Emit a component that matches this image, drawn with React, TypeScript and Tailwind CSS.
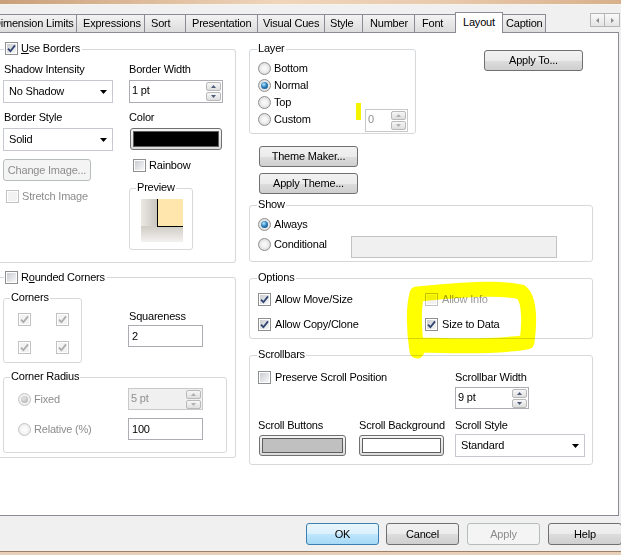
import React from "react";

type CBProps = { checked?: boolean; disabled?: boolean };

function CheckBox({ checked = false, disabled = false }: CBProps) {
  return (
    <span
      className={`relative inline-flex w-[13px] h-[13px] shrink-0 items-center justify-center border bg-white ${
        disabled ? "border-[#c2c2c2]" : "border-[#8e8f8f]"
      }`}
    >
      <span
        className={`w-[9px] h-[9px] ${
          disabled ? "bg-[#f2f2f2]" : "bg-[linear-gradient(135deg,#c9ccd1,#f8f8f8)]"
        }`}
      />
      {checked && (
        <svg className="absolute left-0 top-0" width="11" height="11" viewBox="0 0 11 11">
          <path
            d="M2 5.6 L4.4 8.2 L9 2.4"
            fill="none"
            stroke={disabled ? "#ababab" : "#2f4370"}
            strokeWidth="1.8"
          />
        </svg>
      )}
    </span>
  );
}

function Radio({ checked = false, disabled = false }: CBProps) {
  return (
    <span
      className={`inline-flex w-[13px] h-[13px] shrink-0 rounded-full border items-center justify-center ${
        disabled
          ? "border-[#c4c4c4] bg-[radial-gradient(circle,#fafafa_30%,#e2e2e2_100%)]"
          : "border-[#8e8f8f] bg-[radial-gradient(circle,#f7f7f7_25%,#cfcfcf_100%)]"
      }`}
    >
      {checked && (
        <span
          className={`w-[7px] h-[7px] rounded-full ${
            disabled
              ? "bg-[radial-gradient(circle_at_40%_35%,#e6e6e6,#a9a9a9)]"
              : "bg-[radial-gradient(circle_at_40%_35%,#bfe9fc_0%,#2b82c2_45%,#0c3b66_100%)]"
          }`}
        />
      )}
    </span>
  );
}

function Arrow({ up = false, color = "#4e5b7a" }: { up?: boolean; color?: string }) {
  return (
    <svg width="5" height="3" viewBox="0 0 5 3">
      <path d={up ? "M0 3 L2.5 0 L5 3 Z" : "M0 0 L5 0 L2.5 3 Z"} fill={color} />
    </svg>
  );
}

function SpinBtns({ disabled = false }: { disabled?: boolean }) {
  const c = disabled ? "#b0b0b0" : "#4e5b7a";
  return (
    <div className="flex flex-col gap-[1px] mr-[1px] mt-[1px]">
      <span className="flex w-[15px] h-[9px] items-center justify-center border border-[#b9b9b9] rounded-[2px] bg-[linear-gradient(#f7f7f7,#dedede)]">
        <Arrow up color={c} />
      </span>
      <span className="flex w-[15px] h-[9px] items-center justify-center border border-[#b9b9b9] rounded-[2px] bg-[linear-gradient(#f7f7f7,#dedede)]">
        <Arrow color={c} />
      </span>
    </div>
  );
}

function Spin({
  text,
  className,
  disabled = false,
  gray = false,
}: {
  text: string;
  className: string;
  disabled?: boolean;
  gray?: boolean;
}) {
  return (
    <div
      className={`flex items-start border ${disabled ? "border-[#c9c9c9]" : "border-[#abadb3]"} ${
        gray ? "bg-[#f0f0f0]" : "bg-white"
      } ${className}`}
    >
      <span
        className={`flex-1 pl-[2px] pt-[3px] leading-[13px] ${disabled ? "text-[#8f8f8f]" : ""}`}
      >
        {text}
      </span>
      <SpinBtns disabled={disabled} />
    </div>
  );
}

function Select({ text, className }: { text: string; className: string }) {
  return (
    <div
      className={`flex items-center justify-between border border-[#c6cad0] bg-white pl-[5px] pr-[5px] ${className}`}
    >
      <span className="leading-[13px]">{text}</span>
      <svg width="7" height="4" viewBox="0 0 7 4">
        <path d="M0 0 L7 0 L3.5 4 Z" fill="#000" />
      </svg>
    </div>
  );
}

function TextBox({
  text,
  className,
  disabled = false,
}: {
  text: string;
  className: string;
  disabled?: boolean;
}) {
  return (
    <div
      className={`flex items-center border border-[#abadb3] bg-white pl-[3px] leading-[13px] ${
        disabled ? "text-[#8f8f8f]" : ""
      } ${className}`}
    >
      {text}
    </div>
  );
}

function Btn({
  children,
  className,
  kind = "normal",
}: {
  children: React.ReactNode;
  className: string;
  kind?: "normal" | "default" | "disabled";
}) {
  const style =
    kind === "default"
      ? "border-[#3c7fb1] bg-[linear-gradient(#eaf6fd_0%,#d9f0fc_50%,#bee6fd_51%,#a7d9f5_100%)] text-black"
      : kind === "disabled"
      ? "border-[#b7bcbf] bg-[#f4f4f4] text-[#8d8d8d]"
      : "border-[#707070] bg-[linear-gradient(#f2f2f2_0%,#ebebeb_50%,#dddddd_51%,#cfcfcf_100%)] text-black";
  return (
    <div
      className={`flex items-center justify-center border rounded-[3px] leading-[13px] shrink-0 ${style} ${className}`}
    >
      {children}
    </div>
  );
}

function Swatch({ fill, className }: { fill: string; className: string }) {
  return (
    <div
      className={`border border-[#707070] rounded-[3px] bg-[linear-gradient(#f4f4f4,#dcdcdc)] p-[2px] ${className}`}
    >
      <div className={`w-full h-full border border-[#5e5e5e] ${fill}`} />
    </div>
  );
}

function Label({ children, className = "" }: { children: React.ReactNode; className?: string }) {
  return <span className={`leading-[13px] whitespace-nowrap ${className}`}>{children}</span>;
}

function Legend({ children, className = "" }: { children: React.ReactNode; className?: string }) {
  return (
    <span
      className={`absolute top-[-8px] bg-white px-[1px] leading-[13px] whitespace-nowrap ${className}`}
    >
      {children}
    </span>
  );
}

function Tab({
  label,
  className,
  selected = false,
}: {
  label: string;
  className: string;
  selected?: boolean;
}) {
  if (selected) {
    return (
      <div
        className={`relative z-10 h-[21px] -mb-px border-t border-l border-r border-[#898c95] bg-white pt-[3px] leading-[13px] whitespace-nowrap shrink-0 ${className}`}
      >
        {label}
      </div>
    );
  }
  return (
    <div
      className={`h-[18px] border-t border-[#898c95] bg-[linear-gradient(#f3f3f3,#dcdcdc)] leading-[17px] whitespace-nowrap shrink-0 overflow-hidden ${className}`}
    >
      {label}
    </div>
  );
}

function Preview() {
  return (
    <svg width="42" height="43" viewBox="0 0 42 43">
      <defs>
        <linearGradient id="lg" x1="0" y1="0" x2="1" y2="0">
          <stop offset="0" stopColor="#ebe8e4" />
          <stop offset="1" stopColor="#c9c5bf" />
        </linearGradient>
        <linearGradient id="bg" x1="0" y1="0" x2="0" y2="1">
          <stop offset="0" stopColor="#cfcbc5" />
          <stop offset="1" stopColor="#f3f2f0" />
        </linearGradient>
      </defs>
      <rect x="0" y="0" width="42" height="43" fill="#ebe9e6" />
      <rect x="0" y="0" width="16" height="43" fill="url(#lg)" />
      <rect x="0" y="27" width="42" height="16" fill="url(#bg)" />
      <rect x="16" y="0" width="26" height="27" fill="#fee6ac" />
      <line x1="16.5" y1="0" x2="16.5" y2="27.5" stroke="#000" strokeWidth="1" />
      <line x1="16" y1="27.5" x2="42" y2="27.5" stroke="#000" strokeWidth="1" />
    </svg>
  );
}

export default function App() {
  return (
    <div className="relative w-[621px] h-[555px] overflow-hidden bg-[#f0f0f0] flex flex-col text-[11px] text-black tracking-[-0.2px] font-['Liberation_Sans',Arial,sans-serif]">
      {/* window frame */}
      <div className="h-[4px] shrink-0 bg-[linear-gradient(90deg,#c9a07a,#efd5ba_45%,#e9cbae_70%,#d7b08b)]" />
      <div className="h-[1px] shrink-0 bg-[#f8f2ec]" />

      {/* tab strip */}
      <div className="relative z-10 mt-[7px] h-[20px] flex items-end shrink-0">
        <Tab label="Dimension Limits" className="ml-[-15px] w-[91px] pl-[7px] border-l" />
        <Tab label="Expressions" className="w-[68px] pl-[6px] border-l" />
        <Tab label="Sort" className="w-[41px] pl-[6px] border-l" />
        <Tab label="Presentation" className="w-[72px] pl-[6px] border-l" />
        <Tab label="Visual Cues" className="w-[67px] pl-[5px] border-l" />
        <Tab label="Style" className="w-[38px] pl-[5px] border-l" />
        <Tab label="Number" className="w-[52px] pl-[7px] border-l" />
        <Tab label="Font" className="w-[41px] pl-[7px] border-l" />
        <Tab label="Layout" className="w-[48px] pl-[7px]" selected />
        <Tab label="Caption" className="w-[43px] pl-[3px] border-r" />
        <div className="ml-auto mr-[1px] self-start mt-[1px] flex">
          <span className="flex w-[15px] h-[14px] items-center justify-center border border-[#b5b5b5] bg-[linear-gradient(#fafafa,#e4e4e4)]">
            <svg width="3" height="5" viewBox="0 0 3 5">
              <path d="M3 0 L0 2.5 L3 5 Z" fill="#8a8a8a" />
            </svg>
          </span>
          <span className="flex w-[15px] h-[14px] items-center justify-center border border-l-0 border-[#b5b5b5] bg-[linear-gradient(#fafafa,#e4e4e4)]">
            <svg width="3" height="5" viewBox="0 0 3 5">
              <path d="M0 0 L3 2.5 L0 5 Z" fill="#8a8a8a" />
            </svg>
          </span>
        </div>
      </div>

      {/* panel */}
      <div className="ml-[-1px] w-[620px] h-[484px] shrink-0 bg-white border border-[#898c95] flex items-start">
        {/* left column */}
        <div className="w-[236px] flex flex-col">
          {/* Use Borders */}
          <div className="relative mt-[16px] h-[214px] border-t border-r border-b border-[#d5d9dc] rounded-r-[3px]">
            <div className="absolute left-[4px] top-[-8px] h-[13px] flex items-center gap-[3px] bg-white pl-[1px] pr-[2px]">
              <CheckBox checked />
              <Label>
                <span className="underline">U</span>se Borders
              </Label>
            </div>
            <div className="flex pt-[13px]">
              <div className="ml-[3px] w-[110px] flex flex-col">
                <Label className="pl-[1px]">Shadow Intensity</Label>
                <Select text="No Shadow" className="mt-[4px] h-[23px] w-[110px]" />
                <Label className="mt-[8px] pl-[1px]">Border Style</Label>
                <Select text="Solid" className="mt-[4px] h-[23px] w-[110px]" />
                <Btn kind="disabled" className="mt-[8px] h-[22px] w-[88px]">
                  Change Image...
                </Btn>
                <div className="mt-[9px] pl-[3px] flex items-center gap-[3px]">
                  <CheckBox disabled />
                  <Label className="text-[#8d8d8d]">Stretch Image</Label>
                </div>
              </div>
              <div className="ml-[16px] w-[94px] flex flex-col">
                <Label>Border Width</Label>
                <Spin text="1 pt" className="mt-[4px] h-[23px] w-[94px]" />
                <Label className="mt-[8px]">Color</Label>
                <Swatch fill="bg-black" className="mt-[4px] ml-[1px] h-[22px] w-[92px]" />
                <div className="mt-[9px] pl-[4px] flex items-center gap-[3px]">
                  <CheckBox />
                  <Label>Rainbow</Label>
                </div>
                <div className="relative mt-[16px] w-[64px] h-[62px] border border-[#d5d9dc] rounded-[3px]">
                  <Legend className="left-[6px]">Preview</Legend>
                  <div className="mt-[10px] ml-[11px] w-[42px] h-[43px]">
                    <Preview />
                  </div>
                </div>
              </div>
            </div>
          </div>

          {/* Rounded Corners */}
          <div className="relative mt-[14px] h-[181px] border-t border-r border-b border-[#d5d9dc] rounded-r-[3px]">
            <div className="absolute left-[4px] top-[-7px] h-[13px] flex items-center gap-[3px] bg-white pl-[1px] pr-[2px]">
              <CheckBox />
              <Label>
                R<span className="underline">o</span>unded Corners
              </Label>
            </div>
            <div className="flex flex-col pt-[20px]">
              <div className="flex items-start">
                <div className="relative ml-[3px] w-[79px] h-[65px] border border-[#d5d9dc] rounded-[3px]">
                  <Legend className="left-[6px]">Corners</Legend>
                  <div className="grid grid-cols-[13px_13px] gap-x-[25px] gap-y-[15px] pt-[14px] pl-[14px]">
                    <CheckBox checked disabled />
                    <CheckBox checked disabled />
                    <CheckBox checked disabled />
                    <CheckBox checked disabled />
                  </div>
                </div>
                <div className="ml-[46px] mt-[12px] flex flex-col">
                  <Label className="pl-[1px]">Squareness</Label>
                  <TextBox text="2" className="mt-[2px] h-[22px] w-[75px]" />
                </div>
              </div>
              <div className="relative mt-[14px] ml-[3px] w-[224px] h-[76px] border border-[#d5d9dc] rounded-[3px]">
                <Legend className="left-[6px]">Corner Radius</Legend>
                <div className="flex flex-col">
                  <div className="mt-[10px] h-[22px] flex items-center">
                    <div className="w-[124px] pl-[14px] flex items-center gap-[3px]">
                      <Radio checked disabled />
                      <Label className="text-[#8d8d8d]">Fixed</Label>
                    </div>
                    <Spin text="5 pt" disabled gray className="h-[22px] w-[75px]" />
                  </div>
                  <div className="mt-[8px] h-[22px] flex items-center">
                    <div className="w-[124px] pl-[14px] flex items-center gap-[3px]">
                      <Radio disabled />
                      <Label className="text-[#8d8d8d]">Relative (%)</Label>
                    </div>
                    <TextBox text="100" className="h-[22px] w-[75px]" />
                  </div>
                </div>
              </div>
            </div>
          </div>
        </div>

        {/* right column */}
        <div className="ml-[13px] w-[344px] flex flex-col">
          <div className="mt-[16px] flex items-start">
            <div className="relative w-[167px] h-[85px] border border-[#d5d9dc] rounded-[3px] flex">
              <Legend className="left-[7px]">Layer</Legend>
              <div className="ml-[8px] pt-[10px] flex flex-col">
                {[
                  ["Bottom", false],
                  ["Normal", true],
                  ["Top", false],
                  ["Custom", false],
                ].map(([t, c]) => (
                  <div key={t as string} className="h-[17px] flex items-center gap-[3px]">
                    <Radio checked={c as boolean} />
                    <Label>{t as string}</Label>
                  </div>
                ))}
              </div>
              <div className="ml-auto mr-[7px] mb-[1px] self-end flex items-end">
                <div className="w-[5px] h-[17px] mb-[12px] bg-[#f4f400]" />
                <Spin text="0" disabled className="ml-[4px] h-[23px] w-[43px]" />
              </div>
            </div>
            <Btn className="ml-[68px] mt-[1px] w-[99px] h-[21px]">Apply To...</Btn>
          </div>

          <Btn className="mt-[12px] ml-[10px] w-[99px] h-[21px]">Theme Maker...</Btn>
          <Btn className="mt-[6px] ml-[10px] w-[99px] h-[21px]">Apply Theme...</Btn>

          {/* Show */}
          <div className="relative mt-[11px] h-[57px] border border-[#d5d9dc] rounded-[3px] flex flex-col">
            <Legend className="left-[7px]">Show</Legend>
            <div className="mt-[12px] pl-[8px] h-[13px] flex items-center gap-[3px]">
              <Radio checked />
              <Label>Always</Label>
            </div>
            <div className="mt-[5px] flex items-start">
              <div className="w-[101px] pl-[8px] pt-[2px] flex items-center gap-[3px]">
                <Radio />
                <Label>Conditional</Label>
              </div>
              <div className="w-[206px] h-[22px] border border-[#c3c3c3] bg-[#f0f0f0]" />
            </div>
          </div>

          {/* Options */}
          <div className="relative mt-[16px] h-[61px] border border-[#d5d9dc] rounded-[3px] flex flex-col">
            <Legend className="left-[7px]">Options</Legend>
            <div className="mt-[14px] pl-[8px] flex">
              <div className="w-[167px] flex items-center gap-[4px]">
                <CheckBox checked />
                <Label>Allow Move/Size</Label>
              </div>
              <div className="flex items-center gap-[4px]">
                <CheckBox disabled />
                <Label className="text-[#9a9a9a]">Allow Info</Label>
              </div>
            </div>
            <div className="mt-[12px] pl-[8px] flex">
              <div className="w-[167px] flex items-center gap-[4px]">
                <CheckBox checked />
                <Label>Allow Copy/Clone</Label>
              </div>
              <div className="flex items-center gap-[4px]">
                <CheckBox checked />
                <Label>Size to Data</Label>
              </div>
            </div>
          </div>

          {/* Scrollbars */}
          <div className="relative mt-[16px] h-[110px] border border-[#d5d9dc] rounded-[3px] flex flex-col">
            <Legend className="left-[7px]">Scrollbars</Legend>
            <div className="mt-[15px] pl-[8px] flex items-start">
              <div className="w-[197px] flex items-center gap-[4px]">
                <CheckBox />
                <Label>Preserve Scroll Position</Label>
              </div>
              <div className="flex flex-col">
                <Label>Scrollbar Width</Label>
                <Spin text="9 pt" className="mt-[3px] h-[22px] w-[74px]" />
              </div>
            </div>
            <div className="mt-[10px] pl-[8px] flex items-start">
              <div className="w-[101px] flex flex-col">
                <Label>Scroll Buttons</Label>
                <Swatch fill="bg-[#c0c0c0]" className="mt-[3px] ml-[1px] w-[87px] h-[21px]" />
              </div>
              <div className="w-[96px] flex flex-col">
                <Label>Scroll Background</Label>
                <Swatch fill="bg-white" className="mt-[3px] w-[85px] h-[21px]" />
              </div>
              <div className="flex flex-col">
                <Label>Scroll Style</Label>
                <Select text="Standard" className="mt-[2px] w-[130px] h-[23px]" />
              </div>
            </div>
          </div>
        </div>
      </div>

      {/* footer buttons */}
      <div className="mt-[7px] flex shrink-0">
        <Btn kind="default" className="ml-[306px] w-[73px] h-[22px]">
          OK
        </Btn>
        <Btn className="ml-[7px] w-[73px] h-[22px]">Cancel</Btn>
        <Btn kind="disabled" className="ml-[8px] w-[73px] h-[22px]">
          Apply
        </Btn>
        <Btn className="ml-[8px] w-[74px] h-[22px]">Help</Btn>
      </div>
      <div className="flex-1" />
      <div className="h-[4px] shrink-0 border-t border-[#9c8068] bg-[#e8d0b8]" />

      {/* highlighter scribble */}
      <svg
        className="pointer-events-none absolute left-0 top-0 mix-blend-multiply"
        width="621"
        height="555"
        viewBox="0 0 621 555"
      >
        <path
          d="M417 351 C414 332 413 308 417 294 C450 291 495 286 521 292 C531 300 529 328 527 342 C500 347 452 346 419 345"
          fill="none"
          stroke="#ffff00"
          strokeWidth="15"
          strokeLinecap="round"
          strokeLinejoin="round"
        />
      </svg>
    </div>
  );
}
